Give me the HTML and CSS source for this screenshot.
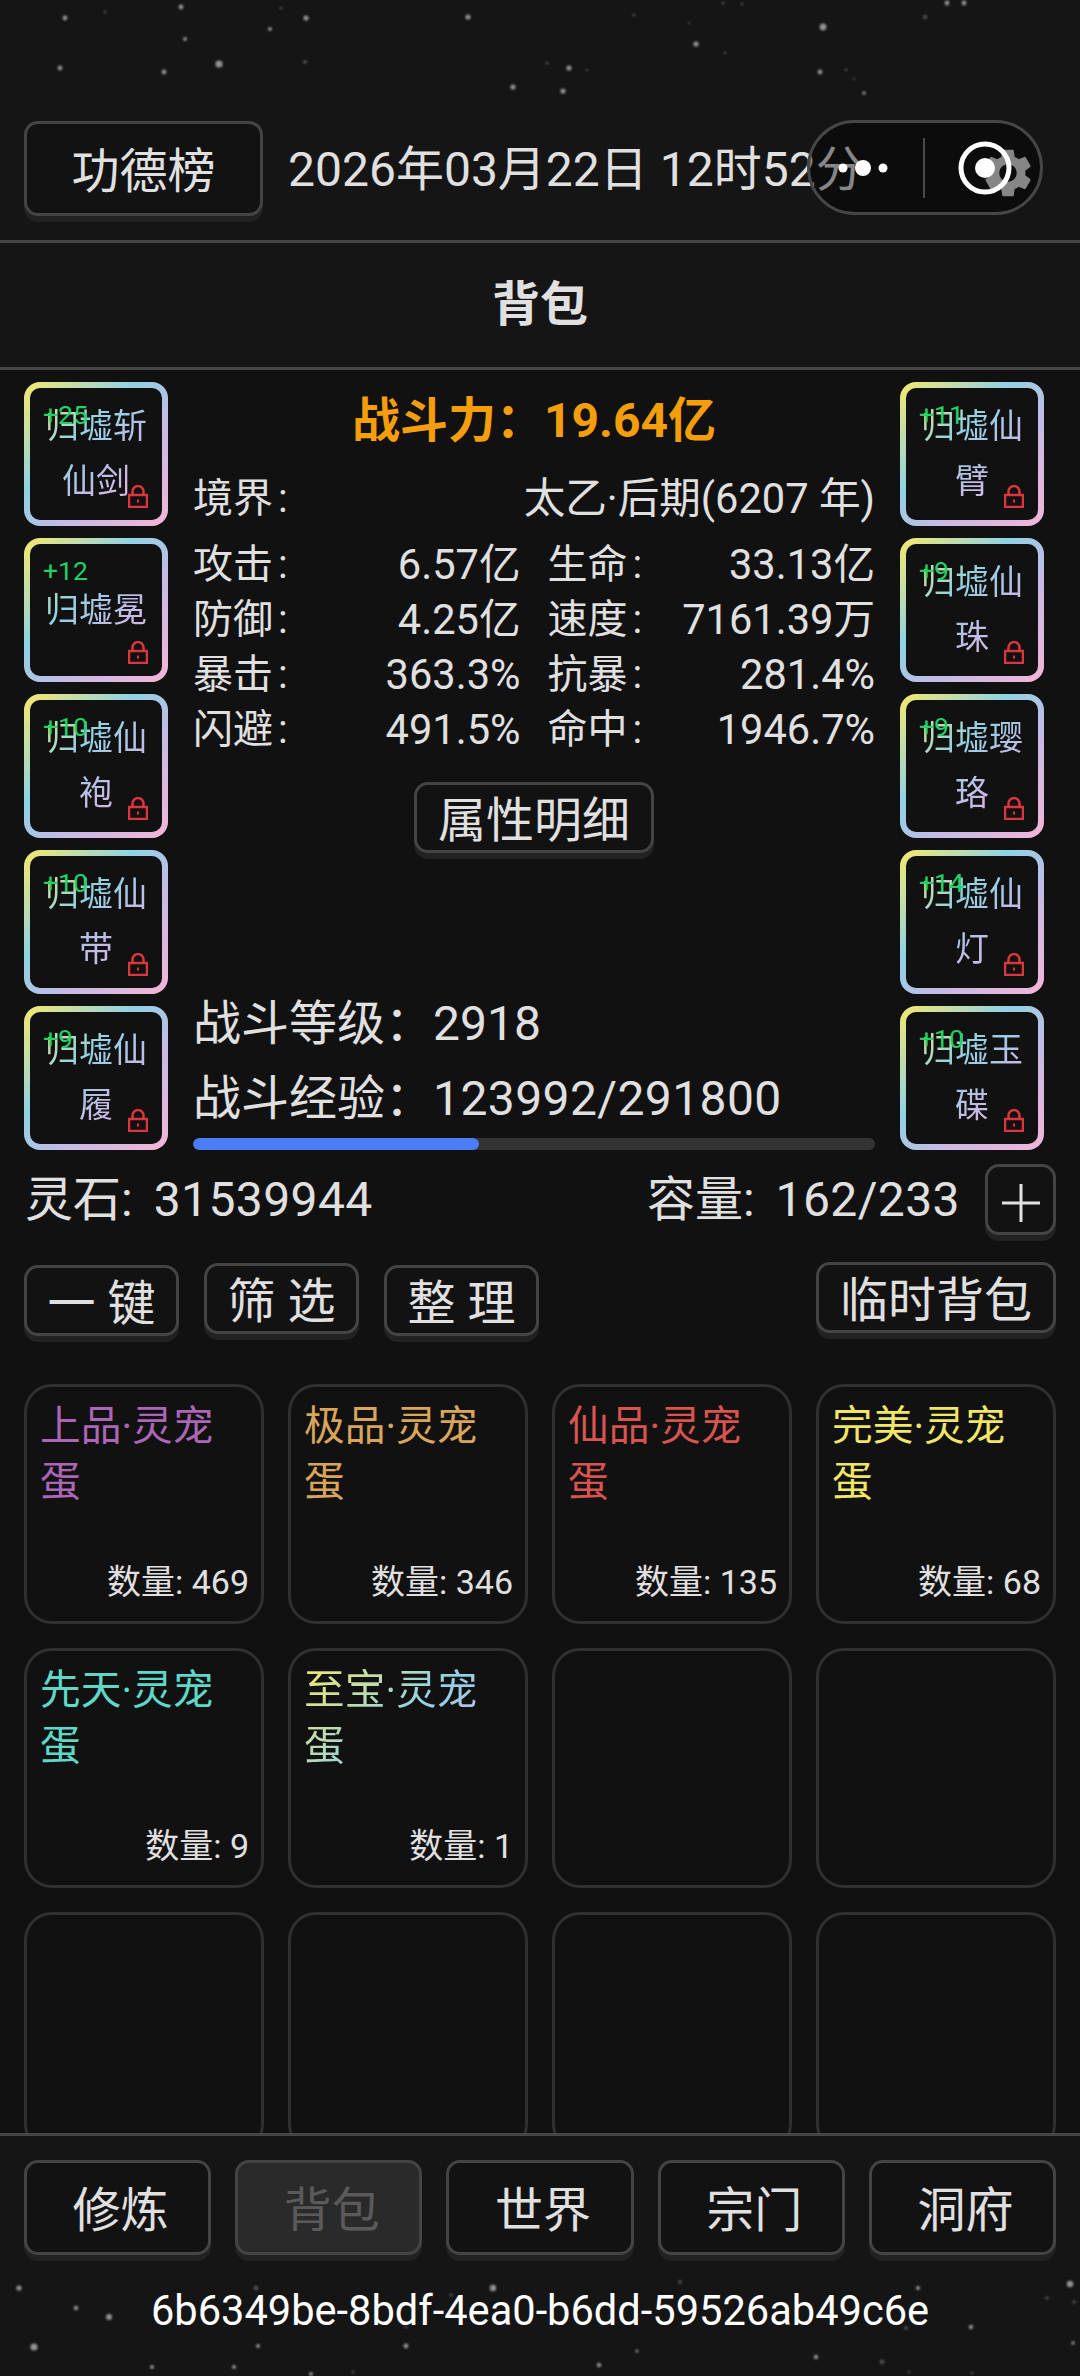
FILE: index.html
```html
<!DOCTYPE html>
<html lang="zh-CN">
<head>
<meta charset="utf-8">
<title>背包</title>
<link rel="stylesheet" href="styles.css">
</head>
<body>
<div class="page">
  <header class="top">
    <svg class="stars" viewBox="0 0 1080 120" width="1080" height="120" aria-hidden="true">
      <g class="star-a">
        <circle cx="181" cy="7" r="2.4"/><circle cx="65" cy="18" r="2.4"/><circle cx="306" cy="18" r="2.6"/><circle cx="270" cy="29" r="2"/><circle cx="185" cy="39" r="2"/><circle cx="468" cy="17" r="2.6"/><circle cx="823" cy="27" r="3.4"/><circle cx="696" cy="44" r="2.6"/><circle cx="947" cy="3" r="2.4"/><circle cx="964" cy="3" r="2.4"/><circle cx="60" cy="68" r="2.4"/><circle cx="164" cy="72" r="2.4"/><circle cx="219" cy="64" r="3.6"/><circle cx="569" cy="68" r="2.6"/><circle cx="820" cy="72" r="2.4"/><circle cx="864" cy="93" r="1.8"/><circle cx="513" cy="87" r="2.6"/><circle cx="563" cy="91" r="2.6"/>
      </g>
      <g class="star-b">
        <circle cx="105" cy="12" r="1.6"/><circle cx="281" cy="8" r="1.6"/><circle cx="925" cy="17" r="2.2"/><circle cx="723" cy="3" r="1.6"/><circle cx="742" cy="4" r="1.4"/><circle cx="305" cy="62" r="2"/><circle cx="547" cy="63" r="1.6"/><circle cx="587" cy="70" r="1.2"/><circle cx="846" cy="70" r="1.4"/><circle cx="854" cy="79" r="1.2"/><circle cx="689" cy="23" r="1.2"/><circle cx="725" cy="53" r="1.4"/><circle cx="634" cy="15" r="1.6"/>
      </g>
    </svg>
    <div class="top-row">
      <button class="btn btn-rank">功德榜</button>
      <span class="date">2026年03月22日 12时52分</span>
    </div>
    <svg class="gear" viewBox="0 0 24 24" width="58" height="58" aria-hidden="true"><path d="M19.14 12.94c.04-.3.06-.61.06-.94 0-.32-.02-.64-.07-.94l2.03-1.58c.18-.14.23-.41.12-.61l-1.92-3.32c-.12-.22-.37-.29-.59-.22l-2.39.96c-.5-.38-1.03-.7-1.62-.94l-.36-2.54c-.04-.24-.24-.41-.48-.41h-3.84c-.24 0-.43.17-.47.41l-.36 2.54c-.59.24-1.13.57-1.62.94l-2.39-.96c-.22-.08-.47 0-.59.22L2.74 8.87c-.12.21-.08.47.12.61l2.03 1.58c-.05.3-.09.63-.09.94s.02.64.07.94l-2.03 1.58c-.18.14-.23.41-.12.61l1.92 3.32c.12.22.37.29.59.22l2.39-.96c.5.38 1.03.7 1.62.94l.36 2.54c.05.24.24.41.48.41h3.84c.24 0 .44-.17.47-.41l.36-2.54c.59-.24 1.13-.56 1.62-.94l2.39.96c.22.08.47 0 .59-.22l1.92-3.32c.12-.22.07-.47-.12-.61l-2.01-1.58zM12 15.6c-1.98 0-3.6-1.62-3.6-3.6s1.62-3.6 3.6-3.6 3.6 1.62 3.6 3.6-1.62 3.6-3.6 3.6z"/></svg>
    <div class="capsule">
      <svg class="capsule-icons" viewBox="0 0 236 95" width="236" height="95" aria-hidden="true">
        <circle cx="36" cy="48" r="4.5"/><circle cx="56" cy="48" r="8"/><circle cx="76" cy="48" r="4.5"/>
        <rect class="capsule-div" x="116" y="18" width="2" height="60"/>
        <circle class="ring" cx="178" cy="48" r="24"/><circle cx="178" cy="48" r="10"/>
      </svg>
    </div>
  </header>

  <h1 class="title">背包</h1>

  <main class="content">
    <section class="equip">
      <div class="slots">
        <div class="slot"><div class="slot-inner"><div class="slot-name">归墟斩仙剑</div></div><span class="lvl">+25</span><svg class="lock" viewBox="0 0 20 23" width="20" height="23"><path d="M4.5 10V6.5a5.5 5.5 0 0 1 11 0V10"/><rect x="1" y="10" width="18" height="12"/><rect class="lock-dot" x="9" y="14.5" width="2" height="3"/></svg></div>
        <div class="slot"><div class="slot-inner"><div class="slot-name">归墟冕</div></div><span class="lvl">+12</span><svg class="lock" viewBox="0 0 20 23" width="20" height="23"><path d="M4.5 10V6.5a5.5 5.5 0 0 1 11 0V10"/><rect x="1" y="10" width="18" height="12"/><rect class="lock-dot" x="9" y="14.5" width="2" height="3"/></svg></div>
        <div class="slot"><div class="slot-inner"><div class="slot-name">归墟仙袍</div></div><span class="lvl">+10</span><svg class="lock" viewBox="0 0 20 23" width="20" height="23"><path d="M4.5 10V6.5a5.5 5.5 0 0 1 11 0V10"/><rect x="1" y="10" width="18" height="12"/><rect class="lock-dot" x="9" y="14.5" width="2" height="3"/></svg></div>
        <div class="slot"><div class="slot-inner"><div class="slot-name">归墟仙带</div></div><span class="lvl">+10</span><svg class="lock" viewBox="0 0 20 23" width="20" height="23"><path d="M4.5 10V6.5a5.5 5.5 0 0 1 11 0V10"/><rect x="1" y="10" width="18" height="12"/><rect class="lock-dot" x="9" y="14.5" width="2" height="3"/></svg></div>
        <div class="slot"><div class="slot-inner"><div class="slot-name">归墟仙履</div></div><span class="lvl">+9</span><svg class="lock" viewBox="0 0 20 23" width="20" height="23"><path d="M4.5 10V6.5a5.5 5.5 0 0 1 11 0V10"/><rect x="1" y="10" width="18" height="12"/><rect class="lock-dot" x="9" y="14.5" width="2" height="3"/></svg></div>
      </div>
      <div class="stats">
        <div class="power">战斗力：19.64亿</div>
        <div class="realm"><span class="lab">境界<i>:</i></span><span class="val">太乙·后期(6207 年)</span></div>
        <div class="stat-grid">
          <div class="stat"><span class="lab">攻击<i>:</i></span><span class="val">6.57亿</span></div>
          <div class="stat"><span class="lab">生命<i>:</i></span><span class="val">33.13亿</span></div>
          <div class="stat"><span class="lab">防御<i>:</i></span><span class="val">4.25亿</span></div>
          <div class="stat"><span class="lab">速度<i>:</i></span><span class="val">7161.39万</span></div>
          <div class="stat"><span class="lab">暴击<i>:</i></span><span class="val">363.3%</span></div>
          <div class="stat"><span class="lab">抗暴<i>:</i></span><span class="val">281.4%</span></div>
          <div class="stat"><span class="lab">闪避<i>:</i></span><span class="val">491.5%</span></div>
          <div class="stat"><span class="lab">命中<i>:</i></span><span class="val">1946.7%</span></div>
        </div>
        <button class="btn btn-detail">属性明细</button>
        <div class="battle">
          <div class="battle-line">战斗等级：2918</div>
          <div class="battle-line">战斗经验：<span class="num">123992/291800</span></div>
          <div class="bar"><div class="bar-fill" style="width:42%"></div></div>
        </div>
      </div>
      <div class="slots">
        <div class="slot"><div class="slot-inner"><div class="slot-name">归墟仙臂</div></div><span class="lvl">+11</span><svg class="lock" viewBox="0 0 20 23" width="20" height="23"><path d="M4.5 10V6.5a5.5 5.5 0 0 1 11 0V10"/><rect x="1" y="10" width="18" height="12"/><rect class="lock-dot" x="9" y="14.5" width="2" height="3"/></svg></div>
        <div class="slot"><div class="slot-inner"><div class="slot-name">归墟仙珠</div></div><span class="lvl">+9</span><svg class="lock" viewBox="0 0 20 23" width="20" height="23"><path d="M4.5 10V6.5a5.5 5.5 0 0 1 11 0V10"/><rect x="1" y="10" width="18" height="12"/><rect class="lock-dot" x="9" y="14.5" width="2" height="3"/></svg></div>
        <div class="slot"><div class="slot-inner"><div class="slot-name">归墟璎珞</div></div><span class="lvl">+9</span><svg class="lock" viewBox="0 0 20 23" width="20" height="23"><path d="M4.5 10V6.5a5.5 5.5 0 0 1 11 0V10"/><rect x="1" y="10" width="18" height="12"/><rect class="lock-dot" x="9" y="14.5" width="2" height="3"/></svg></div>
        <div class="slot"><div class="slot-inner"><div class="slot-name">归墟仙灯</div></div><span class="lvl">+14</span><svg class="lock" viewBox="0 0 20 23" width="20" height="23"><path d="M4.5 10V6.5a5.5 5.5 0 0 1 11 0V10"/><rect x="1" y="10" width="18" height="12"/><rect class="lock-dot" x="9" y="14.5" width="2" height="3"/></svg></div>
        <div class="slot"><div class="slot-inner"><div class="slot-name">归墟玉碟</div></div><span class="lvl">+10</span><svg class="lock" viewBox="0 0 20 23" width="20" height="23"><path d="M4.5 10V6.5a5.5 5.5 0 0 1 11 0V10"/><rect x="1" y="10" width="18" height="12"/><rect class="lock-dot" x="9" y="14.5" width="2" height="3"/></svg></div>
      </div>
    </section>

    <section class="wallet">
      <span class="wallet-item"><span>灵石:</span><span class="num">31539944</span></span>
      <span class="wallet-item wallet-cap"><span>容量:</span><span class="num">162/233</span></span>
      <button class="btn btn-plus" aria-label="扩容"><svg viewBox="0 0 38 38" width="38" height="38"><path d="M19 0V38M0 19H38"/></svg></button>
    </section>

    <section class="actions">
      <button class="btn btn-act">一 键</button>
      <button class="btn btn-act btn-raised">筛 选</button>
      <button class="btn btn-act">整 理</button>
      <button class="btn btn-temp">临时背包</button>
    </section>

    <section class="bag">
      <div class="card"><div class="card-name q-purple">上品·灵宠蛋</div><div class="card-count">数量: 469</div></div>
      <div class="card"><div class="card-name q-gold">极品·灵宠蛋</div><div class="card-count">数量: 346</div></div>
      <div class="card"><div class="card-name q-red">仙品·灵宠蛋</div><div class="card-count">数量: 135</div></div>
      <div class="card"><div class="card-name q-yellow">完美·灵宠蛋</div><div class="card-count">数量: 68</div></div>
      <div class="card"><div class="card-name q-teal">先天·灵宠蛋</div><div class="card-count">数量: 9</div></div>
      <div class="card"><div class="card-name q-rainbow">至宝·灵宠蛋</div><div class="card-count">数量: 1</div></div>
      <div class="card"></div>
      <div class="card"></div>
      <div class="card"></div>
      <div class="card"></div>
      <div class="card"></div>
      <div class="card"></div>
    </section>
  </main>

  <footer class="foot">
    <svg class="stars stars-foot" viewBox="0 2270 1080 106" width="1080" height="106" aria-hidden="true">
      <g class="star-a">
        <circle cx="19" cy="2288" r="2.6"/><circle cx="76" cy="2308" r="2.2"/><circle cx="109" cy="2317" r="3"/><circle cx="493" cy="2288" r="3.2"/><circle cx="918" cy="2288" r="2"/><circle cx="1070" cy="2284" r="3.2"/><circle cx="971" cy="2327" r="2.2"/><circle cx="34" cy="2347" r="3.6"/><circle cx="258" cy="2346" r="2"/><circle cx="406" cy="2346" r="2.4"/><circle cx="637" cy="2351" r="1.6"/><circle cx="816" cy="2357" r="2.2"/><circle cx="599" cy="2365" r="2.2"/><circle cx="152" cy="2367" r="2"/><circle cx="234" cy="2367" r="2"/><circle cx="311" cy="2374" r="2"/><circle cx="1073" cy="2343" r="1.8"/>
      </g>
      <g class="star-b">
        <circle cx="256" cy="2288" r="2.4"/><circle cx="680" cy="2282" r="2"/><circle cx="1074" cy="2302" r="1.8"/><circle cx="1047" cy="2298" r="1.8"/><circle cx="906" cy="2328" r="2"/><circle cx="882" cy="2362" r="2.4"/><circle cx="353" cy="2372" r="1.6"/><circle cx="909" cy="2372" r="1.4"/><circle cx="972" cy="2373" r="1.4"/><circle cx="406" cy="2327" r="1.6"/><circle cx="451" cy="2295" r="1.8"/>
      </g>
    </svg>
    <nav class="nav">
      <button class="btn btn-nav">修炼</button>
      <button class="btn btn-nav is-active">背包</button>
      <button class="btn btn-nav">世界</button>
      <button class="btn btn-nav">宗门</button>
      <button class="btn btn-nav">洞府</button>
    </nav>
    <div class="uid">6b6349be-8bdf-4ea0-b6dd-59526ab49c6e</div>
  </footer>
</div>
</body>
</html>
```

FILE: styles.css
```css
* { box-sizing: border-box; }
html, body { margin: 0; padding: 0; background: #151515; }
body {
  width: 1080px;
  height: 2376px;
  overflow: hidden;
  font-family: Roboto, "Noto Sans CJK SC", sans-serif;
  color: #e0e0e0;
}
.page {
  display: flex;
  flex-direction: column;
  width: 1080px;
  height: 2376px;
}
.btn {
  display: block;
  margin: 0;
  padding: 7px 0 0;
  background: #121212;
  border: 3px solid #444;
  border-radius: 14px;
  box-shadow: 0 6px 0 #222;
  color: #e0e0e0;
  font-family: inherit;
  font-size: 48px;
  line-height: 1;
  white-space: nowrap;
}

/* header */
.top {
  position: relative;
  height: 243px;
  padding: 120px 24px 0;
  border-bottom: 3px solid #464646;
  background: #151515;
}
.stars { position: absolute; left: 0; top: 0; filter: blur(.8px); }
.stars-foot { top: auto; bottom: 0; }
.star-a { fill: #d8d8d8; opacity: .65; }
.star-b { fill: #8a8a8a; opacity: .5; }
.top-row { display: flex; align-items: center; gap: 25px; }
.btn-rank { width: 239px; height: 95px; }
.date { padding-top: 2px; font-size: 48px; line-height: 95px; white-space: nowrap; }
.gear { position: absolute; left: 979px; top: 144px; fill: #e0e0e0; }
.capsule {
  position: absolute;
  left: 807px;
  top: 120px;
  width: 236px;
  height: 95px;
  border: 3px solid #464646;
  border-radius: 48px;
  background: rgba(0, 0, 0, .4);
}
.capsule-icons { position: absolute; left: -3px; top: -3px; fill: #fff; }
.capsule-div { fill: #4a4a4a; }
.ring { fill: none; stroke: #fff; stroke-width: 5; }

.title {
  height: 127px;
  margin: 0;
  border-bottom: 3px solid #464646;
  background: #151515;
  font-size: 48px;
  font-weight: 700;
  line-height: 124px;
  text-align: center;
}

/* main */
.content {
  flex: 1;
  min-height: 0;
  overflow: hidden;
  padding: 12px 24px 0;
  background: #111;
}
.equip { display: flex; gap: 25px; margin-right: 12px; }
.slots { display: flex; flex-direction: column; gap: 12px; flex: none; }
.slot {
  position: relative;
  width: 144px;
  height: 144px;
  padding: 6px;
  border-radius: 16px;
  background: linear-gradient(135deg, #f7e96c 0%, #90d2e4 38%, #c3bbe6 62%, #f6b4d8 100%);
}
.slot-inner {
  width: 100%;
  height: 100%;
  border-radius: 10px;
  background: #111;
}
.slot-name {
  display: flex;
  align-items: center;
  justify-content: center;
  height: 100%;
  padding: 0 10px;
  background: linear-gradient(135deg, #f7e96c 0%, #90d2e4 38%, #c3bbe6 62%, #f6b4d8 100%);
  -webkit-background-clip: text;
  background-clip: text;
  color: transparent;
  font-size: 34px;
  line-height: 55px;
  text-align: center;
}
.lvl {
  position: absolute;
  left: 19px;
  top: 18px;
  color: #22d065;
  font-size: 26.5px;
  line-height: 30px;
}
.lock {
  position: absolute;
  right: 20px;
  bottom: 18px;
  fill: none;
  stroke: #d9363e;
  stroke-width: 2.5;
}
.lock-dot { fill: #d9363e; stroke: none; }

.stats {
  display: flex;
  flex-direction: column;
  flex: 1;
  min-width: 0;
}
.power {
  height: 75px;
  padding-top: 3px;
  color: #f59e0b;
  font-size: 48px;
  font-weight: 700;
  line-height: 72px;
  text-align: center;
}
.realm, .stat {
  display: flex;
  justify-content: space-between;
  font-size: 40px;
  line-height: 55px;
  white-space: nowrap;
}
.val { font-size: 41.6px; }
.realm { margin-top: 14px; }
.lab i { margin-left: 5px; font-style: normal; }
.stat-grid {
  display: grid;
  grid-template-columns: 1fr 1fr;
  column-gap: 27px;
  margin-top: 11px;
}
.btn-detail {
  align-self: flex-start;
  width: 240px;
  height: 71px;
  margin: 25px 0 0 221px;
}
.battle { margin-top: auto; }
.battle-line { font-size: 48px; line-height: 75px; white-space: nowrap; }
.num { letter-spacing: .4px; }
.bar {
  height: 12px;
  margin-top: 2px;
  border-radius: 6px;
  background: #333;
  overflow: hidden;
}
.bar-fill { height: 100%; border-radius: 6px; background: #4a7cf3; }

.wallet {
  display: flex;
  align-items: center;
  height: 71px;
  margin-top: 14px;
  font-size: 48px;
  line-height: 71px;
  white-space: nowrap;
}
.wallet-item { display: flex; gap: 21px; margin-left: 1px; }
.wallet-cap { margin-left: auto; margin-right: 25px; }
.btn-plus {
  display: flex;
  align-items: center;
  justify-content: center;
  width: 71px;
  height: 71px;
  padding: 6px 0 0;
}
.btn-plus svg { fill: none; stroke: #e0e0e0; stroke-width: 3; }

.actions {
  display: flex;
  align-items: flex-start;
  gap: 25px;
  margin-top: 27px;
}
.btn-act { width: 155px; height: 71px; margin-top: 3px; }
.btn-raised { margin-top: 1px; }
.btn-temp { width: 240px; height: 71px; margin-left: auto; }

.bag {
  display: grid;
  grid-template-columns: repeat(4, 240px);
  grid-auto-rows: 240px;
  gap: 24px;
  margin-top: 48px;
}
.card {
  display: flex;
  flex-direction: column;
  padding: 11px 12px 15px 13px;
  border: 3px solid #303030;
  border-radius: 28px;
  background: #111;
}
.card-name { font-size: 40.7px; line-height: 56px; }
.card-count {
  margin-top: auto;
  font-size: 34px;
  line-height: 48px;
  text-align: right;
}
.q-purple { color: #ab66b5; }
.q-gold { color: #d9a55c; }
.q-red { color: #d9534f; }
.q-yellow { color: #f0e668; }
.q-teal { color: #5fd8c8; }
.q-rainbow {
  background: linear-gradient(135deg, #f7e96c 0%, #90d2e4 50%, #c3bbe6 75%, #f6b4d8 100%);
  -webkit-background-clip: text;
  background-clip: text;
  color: transparent;
}

/* footer */
.foot {
  position: relative;
  height: 243px;
  border-top: 3px solid #464646;
  background: #151515;
}
.nav {
  position: relative;
  display: flex;
  gap: 24px;
  padding: 24px 24px 0;
}
.btn-nav { flex: 1; height: 95px; padding-left: 6px; }
.is-active { background: #2a2a2a; color: #5a5a5a; }
.uid {
  position: relative;
  margin-top: 28px;
  color: #fff;
  font-size: 41.6px;
  line-height: 56px;
  text-align: center;
}
```
